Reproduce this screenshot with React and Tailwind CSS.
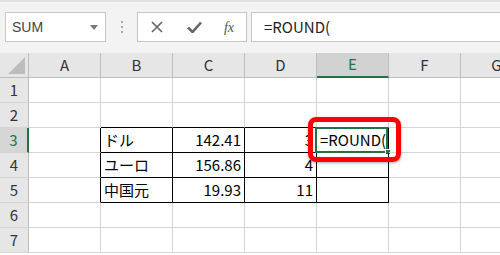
import React from "react";

const cols = ["A", "B", "C", "D", "E", "F", "G"];
const rows = [1, 2, 3, 4, 5, 6, 7];

// cell contents keyed by "col+row"
const cells = {
    B3: { text: "ドル" },
    C3: { text: "142.41", right: true },
    D3: { text: "3", right: true },
    E3: { text: "=ROUND(", editing: true },
    B4: { text: "ユーロ" },
    C4: { text: "156.86", right: true },
    D4: { text: "4", right: true },
    B5: { text: "中国元" },
    C5: { text: "19.93", right: true },
    D5: { text: "11", right: true },
};

const font = { fontFamily: '"Noto Sans CJK JP", "Noto Sans", sans-serif' };

const Cell = ({ c, r }) => {
    const ci = cols.indexOf(c) + 1;
    const blackRight = r >= 3 && r <= 5 && ci >= 1 && ci <= 5;
    const blackBottom = ci >= 2 && ci <= 5 && r >= 2 && r <= 5;
    const data = cells[c + r];
    return (
        <div
            className={
                "relative h-[25px] border-r border-b flex items-center whitespace-nowrap text-[15px] text-black " +
                (blackRight ? "border-r-black " : "border-r-[#d4d4d4] ") +
                (blackBottom ? "border-b-black " : "border-b-[#d4d4d4] ") +
                (data && data.right ? "justify-end pr-[3px]" : "pl-[3px]")
            }
        >
            {data && <span className={data.editing ? "relative z-10" : ""}>{data.text}</span>}
            {data && data.editing && (
                <>
                    <div className="absolute left-[-2px] top-[-1px] w-[73px] h-[26px] border-2 border-[#217346]" />
                    <div className="absolute right-[-3px] bottom-[-3px] w-[6px] h-[6px] bg-[#217346] border border-white" />
                </>
            )}
        </div>
    );
};

const App = () => {
    return (
        <div className="relative w-[500px] h-[255px] overflow-hidden bg-white" style={font}>
            {/* formula toolbar */}
            <div className="h-[53px] bg-[#f3f3f3] border-t-2 border-[#e1e1e1] flex items-start pt-[10px] pl-[5px]">
                <div className="w-[101px] h-[30px] bg-white border border-[#c6c6c6] flex items-center justify-between pl-[6px] pr-[7px]">
                    <span className="text-[14px] text-[#444]" style={{ fontFamily: '"Liberation Sans", sans-serif' }}>SUM</span>
                    <svg width="8" height="5" viewBox="0 0 8 5"><path d="M0 0h8L4 5z" fill="#777" /></svg>
                </div>
                <div className="w-[31px] h-[30px] flex flex-col items-center justify-center gap-[3px]">
                    <div className="w-[2px] h-[2px] bg-[#aaa]" />
                    <div className="w-[2px] h-[2px] bg-[#aaa]" />
                    <div className="w-[2px] h-[2px] bg-[#aaa]" />
                </div>
                <div className="w-[110px] h-[30px] bg-white border border-[#c6c6c6] flex items-center">
                    <div className="w-[38px] flex justify-center">
                        <svg width="12" height="12" viewBox="0 0 12 12"><path d="M1 1l10 10M11 1L1 11" stroke="#666" strokeWidth="1.7" /></svg>
                    </div>
                    <div className="w-[36px] flex justify-center">
                        <svg width="15" height="12" viewBox="0 0 15 12"><path d="M1 6.5l4.5 4.5L14 1.5" stroke="#666" strokeWidth="2.6" fill="none" /></svg>
                    </div>
                    <div className="w-[34px] flex justify-center">
                        <span className="italic text-[14px] text-[#555]" style={{ fontFamily: '"Liberation Serif", serif' }}>fx</span>
                    </div>
                </div>
                <div className="ml-[4px] flex-1 h-[30px] bg-white border border-[#c6c6c6] border-r-0 flex items-center pl-[12px]">
                    <span className="text-[15px] text-[#222]">=ROUND(</span>
                </div>
            </div>

            {/* sheet */}
            <div className="grid grid-cols-[29px_72px_72px_72px_72px_72px_72px_72px] w-[533px]">
                {/* header row */}
                <div className="h-[25px] bg-[#e6e6e6] border-r border-b border-[#bdbdbd] flex items-end justify-end pr-[3px] pb-[3px]">
                    <svg width="17" height="17" viewBox="0 0 17 17"><path d="M17 0v17H0z" fill="#bdbdbd" /></svg>
                </div>
                {cols.map((c) => (
                    <div
                        key={c}
                        className={
                            "h-[25px] flex items-center justify-center text-[15px] border-r border-r-[#bdbdbd] " +
                            (c === "E"
                                ? "bg-[#d2d2d2] text-[#217346] border-b-2 border-b-[#217346]"
                                : "bg-[#e6e6e6] text-[#333] border-b border-b-[#bdbdbd]")
                        }
                    >
                        {c}
                    </div>
                ))}

                {rows.map((r) => (
                    <React.Fragment key={r}>
                        <div
                            className={
                                "h-[25px] flex items-center justify-center text-[15px] border-b border-b-[#d4d4d4] " +
                                (r === 3
                                    ? "bg-[#d6d6d6] text-[#217346] border-r-2 border-r-[#217346]"
                                    : "bg-[#e6e6e6] text-[#333] border-r border-r-[#bdbdbd]")
                            }
                        >
                            {r}
                        </div>
                        {cols.map((c) => (
                            <Cell key={c} c={c} r={r} />
                        ))}
                    </React.Fragment>
                ))}
            </div>

            {/* red highlight around E3 */}
            <div className="absolute left-[308px] top-[117px] w-[93px] h-[45px] rounded-[8px] border-[5px] border-[#ff0000] shadow-[0_1px_3px_rgba(0,0,0,0.35)]" />
        </div>
    );
};

export default App;
